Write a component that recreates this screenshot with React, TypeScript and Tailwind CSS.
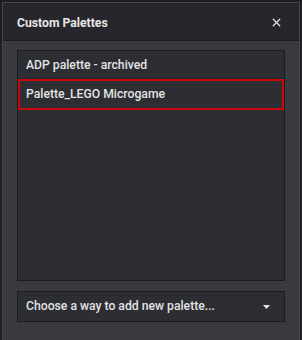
import { X } from 'lucide-react'

const palettes = ['ADP palette - archived', 'Palette_LEGO Microgame']

export default function App() {
  const selected = 1

  return (
    <div
      className="w-[302px] h-[340px] bg-[#1e1f23] pl-[2px] pr-[2px] pt-[2px] overflow-hidden"
      style={{ fontFamily: 'Roboto, "Noto Sans", sans-serif' }}
    >
      <div className="h-full flex flex-col border border-[#45474e] border-b-0 bg-[#383a40]">
        {/* Header */}
        <div className="h-[38px] flex items-center justify-between pl-[14px] pr-[16px] bg-[#26272c] border-b border-[#1b1c20]">
          <span className="pt-[4px] text-[12.2px] font-bold text-[#e6e6e6]">Custom Palettes</span>
          <X size={13} strokeWidth={2.4} className="mt-[2px] text-[#e0e0e0]" />
        </div>

        <div className="flex-1 flex flex-col pt-[9px] pl-[14px] pr-[14px]">
          {/* Palette list */}
          <div className="h-[231px] border border-[#1b1c20] bg-[#2d2e34] flex flex-col">
            {palettes.map((name, i) => (
              <div
                key={name}
                className={
                  i === selected
                    ? 'h-[31px] flex items-center px-[6px] border-2 border-[#c80808] text-[12.2px] font-medium text-[#e3e3e3]'
                    : 'h-[28px] pt-[1px] flex items-center px-[8px] text-[12.2px] font-medium text-[#e3e3e3] border-b border-[#24252a]'
                }
              >
                {name}
              </div>
            ))}
          </div>

          {/* Add dropdown */}
          <div className="mt-[10px] h-[31px] border border-[#1b1c20] bg-[#2d2e34] flex items-center justify-between pl-[8px] pr-[14px]">
            <span className="text-[12.2px] font-medium text-[#e3e3e3]">Choose a way to add new palette...</span>
            <svg width="7" height="4" viewBox="0 0 7 4">
              <path d="M0 0 H7 L3.5 4 Z" fill="#e6e6e6" />
            </svg>
          </div>
        </div>
      </div>
    </div>
  )
}
